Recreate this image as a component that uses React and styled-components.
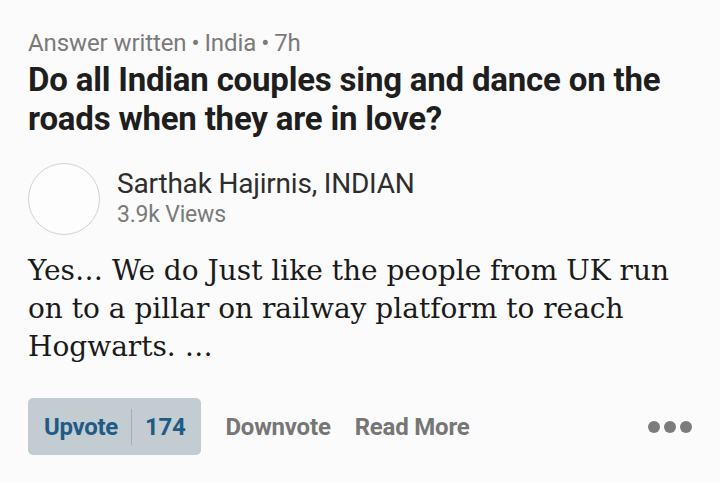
import React from "react";
import styled, { createGlobalStyle } from "styled-components";

const Global = createGlobalStyle`
  html, body {
    margin: 0;
    padding: 0;
    background: #fbfbfb;
  }
`;

const Card = styled.div`
  width: 720px;
  height: 483px;
  box-sizing: border-box;
  padding: 27px 0 0 28px;
  background: #fbfbfb;
  font-family: Roboto, "Liberation Sans", sans-serif;
  display: flex;
  flex-direction: column;
`;

const Meta = styled.div`
  font-size: 24px;
  line-height: 32px;
  color: #7a7a7a;
  letter-spacing: -0.1px;
  .dot {
    margin: 0 5px;
  }
`;

const Title = styled.h1`
  margin: 1px 0 0;
  font-size: 33px;
  font-weight: 700;
  line-height: 39px;
  color: #1e1e1e;
  letter-spacing: -0.2px;
`;

const Author = styled.div`
  display: flex;
  align-items: center;
  gap: 17px;
  margin-top: 25px;
`;

const Avatar = styled.div`
  width: 72px;
  height: 72px;
  border-radius: 50%;
  border: 1.5px solid #d2d2d2;
  background: #fdfdfd;
  box-sizing: border-box;
`;

const AuthorInfo = styled.div`
  display: flex;
  flex-direction: column;
  margin-top: -2px;
`;

const Name = styled.span`
  font-size: 28px;
  line-height: 34px;
  color: #2e2e2e;
  letter-spacing: -0.2px;
`;

const Views = styled.span`
  font-size: 23px;
  line-height: 28px;
  color: #7a7a7a;
  letter-spacing: -0.2px;
`;

const Body = styled.p`
  margin: 17px 0 0;
  font-family: "DejaVu Serif", "Liberation Serif", serif;
  font-size: 28px;
  line-height: 38px;
  color: #1a1a1a;
  width: 680px;
  letter-spacing: 0;
`;

const Actions = styled.div`
  display: flex;
  align-items: center;
  margin-top: 32px;
  padding-right: 28px;
`;

const Upvote = styled.div`
  display: flex;
  align-items: center;
  height: 57px;
  padding: 0 16px;
  background: #c3ccd1;
  border-radius: 5px;
  color: #1f5b85;
  font-size: 24px;
  font-weight: 700;
  letter-spacing: -0.3px;
`;

const Divider = styled.span`
  width: 1px;
  height: 36px;
  background: #a3afb6;
  margin: 0 13px 0 13px;
`;

const TextAction = styled.span`
  font-size: 24px;
  font-weight: 700;
  color: #767676;
  letter-spacing: -0.2px;
  margin-left: ${(p) => p.gap}px;
`;

const More = styled.div`
  margin-left: auto;
  display: flex;
  gap: 4px;
`;

const Dot = styled.span`
  width: 12px;
  height: 12px;
  border-radius: 50%;
  background: #7c7c7c;
`;

export default function App() {
  return (
    <>
      <Global />
      <Card>
        <Meta>
          Answer written<span className="dot">•</span>India<span className="dot">•</span>7h
        </Meta>
        <Title>
          Do all Indian couples sing and dance on the roads when they are in love?
        </Title>
        <Author>
          <Avatar />
          <AuthorInfo>
            <Name>Sarthak Hajirnis, INDIAN</Name>
            <Views>3.9k Views</Views>
          </AuthorInfo>
        </Author>
        <Body>
          Yes… We do Just like the people from UK run on to a pillar on railway platform to reach Hogwarts. …
        </Body>
        <Actions>
          <Upvote>
            Upvote
            <Divider />
            174
          </Upvote>
          <TextAction gap={24}>Downvote</TextAction>
          <TextAction gap={24}>Read More</TextAction>
          <More>
            <Dot />
            <Dot />
            <Dot />
          </More>
        </Actions>
      </Card>
    </>
  );
}
